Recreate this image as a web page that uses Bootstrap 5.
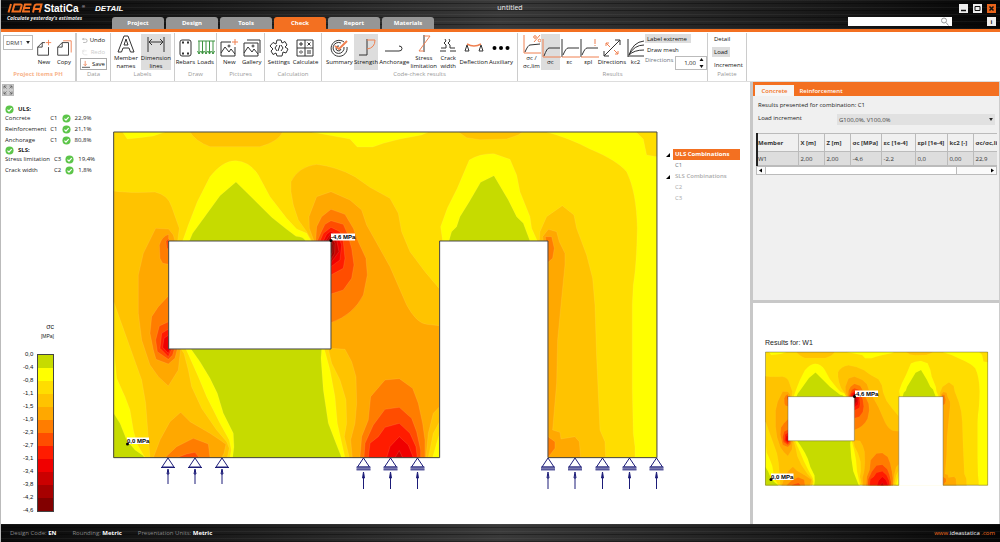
<!DOCTYPE html>
<html lang="en">
<head>
<meta charset="utf-8">
<meta name="viewport" content="width=device-width, initial-scale=1">
<title>IDEA StatiCa Detail</title>
<link href="https://cdn.jsdelivr.net/npm/bootstrap@5.3.0/dist/css/bootstrap.min.css" rel="stylesheet">
<style>
:root{--brand:#f37021}
body{font:400 6px/8px "Open Sans","Noto Sans",sans-serif;color:#222;background:#fff;border-left:1px solid #bbb}
button,select,input{font:inherit;color:inherit;border:0;padding:0;background:none;border-radius:0}
svg{display:block}
.dark-metal{background:repeating-linear-gradient(180deg,rgba(255,255,255,.05) 0 1px,transparent 1px 3px,rgba(0,0,0,.35) 3px 4px,transparent 4px 7px),linear-gradient(90deg,#0a0a0a 0,#191919 20%,#393939 50%,#1b1b1b 80%,#050505 100%)}
.topbar{height:32px;border-bottom:3px solid var(--brand);color:#eee}
.brandbox{width:111px;padding:3px 0 0 6px}
.slogan{font:italic 700 5px/7px "Open Sans",sans-serif;color:#eee}
.doc-title{font-size:7px;line-height:16px;padding-left:60px}
.tabs-row{gap:2px}
.main-tab{width:52px;height:12px;background:#969696;color:#fff;font-weight:700;border-radius:3px 3px 0 0}
.main-tab.on{background:var(--brand)}
.topside{width:152px;padding:4px 4px 0 0}
.win-row{gap:5px}
.win{width:9px;height:9px;background:#eee;color:#111}
.win.x{background:#e8641b}
.search{width:104px;height:9px;background:#fff}
.search input{width:92px;color:#222}
.ribbon{height:50px;border-bottom:1px solid #ddd;padding-top:1px}
.group{border-right:1px solid #ccc;height:48px}
.group>div:first-child{height:37px;padding-top:1px}
.caption{color:#999;line-height:9px}
.caption.warm{color:#f8b48c;font-weight:700}
.w-proj{width:76px;border-right:2px solid #ccc}.w-data{width:34px}.w-lab{width:64px}.w-draw{width:42px}.w-pic{width:48px}.w-calc{width:57px}.w-check{width:196px}.w-res{width:190px}.w-pal{width:39px}
.tool{height:36px;color:#111}
.tool svg,.tiny svg{fill:none;stroke:#333;stroke-width:1}
.tool svg{width:20px;height:20px;margin:0 auto}
.w-proj .tool svg{width:18px}
.tool.on,.flat.on{background:#ddd}
.tool.mid{min-width:18px}
.tiny{height:12px;color:#111;padding:0 1px;gap:2px;border:1px solid transparent}
.tiny.boxed{border-color:#aaa}
.tiny.dim{color:#ccc}
.tiny svg{width:9px;height:9px}
.data-tools{padding:0 3px}
.flat{height:10px;color:#111;padding:0 2px;text-align:left}
.res-side{min-width:62px;gap:2px}
.proj-tools{padding:0 2px}
.picker{width:30px;height:15px;margin-top:1px;border:1px solid #bbb;padding-left:2px;appearance:none;color:#444;background:url("data:image/svg+xml,%3Csvg xmlns='http://www.w3.org/2000/svg' viewBox='0 0 5 4'%3E%3Cpath d='M0 0h5L2.500 4z' fill='%23222'/%3E%3C/svg%3E") no-repeat right 2px center/4px 3px}
.picker.wide{width:158px;height:11px;margin:0;border:0;background-color:#e1e1e1}
.spin{width:32px;height:14px;border:1px solid #bbb;background:#fff}
.spin input{width:20px;text-align:right}
.left-col{width:111px}
.expand{width:12px;height:12px;margin:2px 0 9px 1px;background:#ccc;border:1px solid #bbb}
.checks{margin-left:4px}
.checks h2{font:700 6px/8px "Open Sans",sans-serif;margin:0;height:8px}
.checks td{height:11px;padding:0 4px 0 0;line-height:9px;vertical-align:middle}
.tick{width:9px;height:9px}
.legend{font:400 6px/13px "Liberation Sans",sans-serif;color:#111;margin:0 0 7px 22px}
.legend-head{font:400 5px/9px "Liberation Sans",sans-serif;width:53px;text-align:right;margin-bottom:7px}
.legend-head b{font:400 7px/9px "Liberation Sans",sans-serif}
.scale{width:17px;margin-top:6px;border:1px solid #444;align-self:flex-start}
.scale i{display:block;height:13px}
.plot{padding-top:46px;min-width:0}
.tree-col{width:85px;padding:67px 10px 0 1px}
.tree-col a{display:block;line-height:11px;color:#aaa;text-decoration:none;padding-left:2px;flex:1}
.tree-col .branch{font-weight:600}
.tree-col .picked{background:var(--brand);color:#fff;font-weight:700}
.tree-col .leaf{padding-left:7px}
.tree-col .arrow{width:6px;height:4px;margin-right:1px}
.side{width:250px;border-left:3px solid #c8c8c8;border-right:1px solid #ccc}
.side-top{background:#f0f0f0;border-bottom:3px solid #c8c8c8;height:50%;padding-bottom:2px}
.side-tabs{background:var(--brand);height:14px;padding:3px 0 0 2px}
.side-tabs button{height:11px;width:39px;color:#fff;font-weight:600}
.side-tabs button.on{background:#f6f6f6;color:var(--brand)}
.side-tabs button+button{width:54px}
.side-note{margin:0;padding:5px 0 0 5px}
.side-pick{padding:5px 4px 0 5px}
.grid-box{margin:8px 2px 0 3px;overflow:hidden;border-left:2px solid #222}
.grid-box table{width:254px;table-layout:fixed;margin:0;color:#333}
.grid-box th,.grid-box td{border:1px solid #bbb;padding:0 0 0 2px;white-space:nowrap;vertical-align:middle}
.grid-box th{height:18px;font-weight:700;background:#f0f0f0}
.grid-box td{height:14px;background:#ddd}
.grid-box th:first-child,.grid-box td:first-child{padding-left:0;border-left:0}
.c1{width:40px}.c2{width:26px}.c3{width:31px}.c4{width:34px}.c5{width:32px}
.hbar{margin:0 2px 0 3px;height:9px;border:1px solid #bbb;background:#fafafa}
.hbar svg{width:8px;height:7px}
.hbar div{background:#fff;border:solid #bbb;border-width:0 1px;margin-right:31px}
.mini-title{font:400 7px/9px "Liberation Sans",sans-serif;padding:35px 0 3px 12px}
.status{height:18px;color:#888;padding:0 5px 0 9px}
.status b{color:#fff}
.status a{color:var(--brand);text-decoration:none}
.status a span{color:#fff}
svg text{font-family:"Liberation Sans",Arial,sans-serif}
.o{stroke:#f08050}
.l0{fill:#c6db00}.l1{fill:#ff0}.l2{fill:#fd0}.l3{fill:#ffc300}.l4{fill:#ffa800}.l5{fill:#ff7d00}.l6{fill:#ff4d00}.l7{fill:#ff1c00}.l8{fill:#f00000}.l9{fill:#cb0000}.l10{fill:#a60000}.l11{fill:#820000}
.scale .l0{background:#c6db00}.scale .l1{background:#ff0}.scale .l2{background:#fd0}.scale .l3{background:#ffc300}.scale .l4{background:#ffa800}.scale .l5{background:#ff7d00}.scale .l6{background:#ff4d00}.scale .l7{background:#ff1c00}.scale .l8{background:#f00000}.scale .l9{background:#cb0000}.scale .l10{background:#a60000}.scale .l11{background:#820000}
</style>
</head>
<body class="vh-100 d-flex flex-column overflow-hidden">

<svg width="0" height="0" class="position-absolute" aria-hidden="true">
<defs>
<g id="wall">
<path class="l2" d="M11 21H1641V998H11z"/>
<g stroke="#ffe9a0" stroke-opacity=".2" stroke-width="2">
<path class="l1" d="M38 21 52 42 90 38 130 33 165 21zM605 21 720 42 742 66H788L820 55 870 42 935 30 955 21zM1310 21Q1380 40 1440 72 1520 105 1550 140 1580 200 1582 310 1580 420 1570 480L1567 540 1567 790 1570 925 1575 965V998H1641V21z"/>
<path class="l2" d="M1578 21 1600 42 1610 90 1641 95V21z"/>
<path class="l3" d="M240 21Q255 48 300 65L450 65Q505 50 518 21zM1045 21 1070 38 1110 44 1190 42 1225 30 1238 21z"/>
<path class="l1" d="M218 348 235 300 262 230 300 155Q340 105 378 107 420 110 445 150L480 215 530 280 560 312 590 325 603 348z"/>
<path class="l0" d="M238 348 248 325 270 295 330 212 378 171 430 222 485 277 530 313 558 334Q580 335 587 348z"/>
<path class="l1" d="M998 348 992 305 1012 250 1042 190 1078 105Q1110 85 1152 86L1200 103 1220 150 1230 200 1260 275 1265 310 1282 348z"/>
<path class="l0" d="M1017 348 1025 320 1040 305 1050 275 1078 230 1112 172 1152 152 1195 225 1220 275 1240 295 1260 348z"/>
<path class="l3" d="M11 198Q60 205 135 201 175 210 185 245L208 310 203 348 176 400V672H213L222 685 235 735 245 785 275 850 320 915 350 950 358 970 352 998H120L113 915 107 835 95 765 70 695 45 625 11 530z"/>
<path class="l1" d="M11 640 14 700 20 760 45 815 60 855 70 915 80 955 105 998H11z"/>
<path class="l0" d="M11 865 30 895 50 945 75 975 100 992 103 998H11z"/>
<path class="l4" d="M137 310 176 312 190 330 195 348 176 400V672H212L205 735 175 783 145 755 120 720 95 645 85 565V450L100 385z"/>
<path class="l4" d="M130 998 150 945 180 890 212 862 240 890 300 925 330 945 348 958 342 985 335 998z"/>
<path class="l5" d="M176 328Q155 335 148 360L150 400 158 415 176 418zM176 512 145 545 125 575 120 625 130 675 138 703 175 717 195 700 202 672H176z"/>
<path class="l5" d="M165 998 200 965 250 940 295 957 300 998z"/>
<path class="l6" d="M176 340 168 348 170 368 176 375zM176 590 148 603 137 645 142 680 175 703 188 690 193 672H176zM200 998 230 987 255 982 268 998z"/>
<path class="l7" d="M176 612 155 625 150 670 175 695 185 672z"/>
<path class="l8" d="M176 630 162 640 158 667 175 685 181 672z"/>
<path class="l1" d="M228 672 265 755 290 815 330 895 358 945 364 975 360 998H705L682 895 675 815 660 735 643 672z"/>
<path class="l0" d="M243 672 270 710 300 760 322 805 340 865 370 925 372 965 368 998H695L678 955 655 895 640 795 633 700 635 672z"/>
<path class="l3" d="M605 348 590 320 565 285 550 240 543 200V170Q565 125 620 118 680 125 735 155L780 187 840 220 865 265 875 320 900 380 945 440 989 492V998H718L703 935 710 895 708 825 690 765 665 715 655 672H663V348z"/>
<path class="l4" d="M612 348 598 310 597 275 620 215 663 200 720 225 755 255 770 300 840 425 890 540Q920 595 950 598L989 602V845L970 865 955 925 948 998H727L722 945 735 895 740 835 738 755 725 710 705 673 663 670V348z"/>
<path class="l2" d="M955 998 970 925 989 890V998z"/><path class="l1" d="M968 998 980 955 989 925V998z"/>
<path class="l5" d="M617 348 620 305 635 275 663 253 705 268 730 310 745 350 768 400 772 450 760 510Q730 570 663 593V348zM750 998 755 935 775 885 782 815 825 765 868 761 908 790 925 835 938 895 945 945V998z"/>
<path class="l6" d="M622 348 635 318 645 298 663 287 700 298 712 325 725 370 732 420 725 460 700 495 663 507V348zM762 998 765 955 790 900 825 853 868 847 905 880 920 920 932 975V998z"/>
<path class="l7" d="M630 348 640 325 663 307 690 320 700 350 705 400 700 430 663 450V348zM775 998 780 955 805 935 825 907 868 895 900 925 918 965 922 998z"/>
<path class="l8" d="M640 348 650 328 663 318 685 335 695 360 690 405 663 425V348zM830 998 840 965 868 935 895 960 910 998z"/>
<path class="l9" d="M647 348 663 325 680 345 687 380 663 413V348zM855 998 868 977 878 998z"/>
<path class="l10" d="M654 348 663 333 675 355 674 385 663 403V348z"/>
<path class="l11" d="M663 348 669 360 668 380 663 390z"/>
<path class="l3" d="M1288 348 1290 320 1310 275 1357 242 1392 270 1400 310 1430 390 1448 460 1455 540 1460 695 1470 915 1485 950 1487 998H1314V348z"/>
<path class="l4" d="M1300 348 1298 335 1315 313 1340 320 1348 350 1365 385V420L1355 520 1343 645 1340 775 1328 915 1350 922 1353 942 1395 935 1408 950 1412 998H1314V348z"/>
<path class="l5" d="M1308 348 1306 335 1325 335 1333 370 1328 400 1314 412zM1314 935 1335 950V970L1314 998z"/>
</g>
<path fill="#fff" stroke="#444" stroke-width="3" d="M176 348H663V672H176z"/>
<path fill="#fff" d="M989 348H1314V1002H989z"/>
<path fill="none" stroke="#444" stroke-width="3" d="M11 21H1641V998H1314V348H989V998H11z"/>
</g>
<g id="pin" fill="none" stroke="#1c1c78"><path d="M0 0-6 9H6zM-7 9.500H7"/><path d="M0 26V12"/><path d="M0 11-1 16H1z"/></g>
<g id="roll" fill="none" stroke="#1c1c78"><path d="M0 0-6 9H6z"/><path d="M-7 10.500H7" stroke="#7a7ab0" stroke-width="3"/><path d="M-7 9H7M-7 12H7" stroke-width=".7"/><path d="M0 31V16"/><path d="M0 14-1 20H1z"/></g>
<g id="tickmark"><circle cx="5" cy="5" r="4.500" fill="#5cc549"/><path d="M2.700 5.200 4.400 6.900 7.400 3.400" fill="none" stroke="#fff" stroke-width="1.300"/></g>
<path id="axes" d="M2 1V19H20"/>
</defs>
</svg>

<header class="topbar dark-metal d-flex flex-shrink-0">
  <div class="brandbox flex-shrink-0">
    <svg width="118" height="12" viewBox="0 0 118 12" class="overflow-visible" role="img" aria-label="IDEA StatiCa Detail">
      <g fill="none" stroke="#f37021" stroke-width="2"><path d="M4 1 1.500 9.500M7.500 1.500H13.500Q15 1.500 14.600 3L13 8.500H5.500zM24.500 1.500H18L16 8.500H23M17.500 5H23M26 9.500 27.500 3Q28 1.500 29.500 1.500H34.500L32.500 9.500M27 6H33"/></g>
      <text x="37" y="9" fill="#fff" font-size="10" font-weight="700">StatiCa</text><text x="75" y="5" fill="#fff" font-size="4">®</text>
      <text x="88" y="8" fill="#fff" font-size="8" font-weight="700" font-style="italic">DETAIL</text>
    </svg>
    <div class="slogan text-nowrap">Calculate yesterday's estimates</div>
  </div>
  <div class="flex-grow-1 d-flex flex-column justify-content-between">
    <div class="doc-title text-center">untitled</div>
    <nav class="tabs-row d-flex">
      <button class="main-tab">Project</button><button class="main-tab">Design</button><button class="main-tab">Tools</button><button class="main-tab on">Check</button><button class="main-tab">Report</button><button class="main-tab">Materials</button>
    </nav>
  </div>
  <div class="topside flex-shrink-0 d-flex flex-column align-items-end gap-1">
    <div class="win-row d-flex">
      <button class="win" aria-label="Minimize"><svg viewBox="0 0 9 9"><path d="M2 6.500H7" stroke="#111" stroke-width="1.500"/></svg></button>
      <button class="win" aria-label="Maximize"><svg viewBox="0 0 9 9"><path d="M2 2.500H7V6.500H2z" fill="none" stroke="#111"/></svg></button>
      <button class="win x" aria-label="Close"><svg viewBox="0 0 9 9"><path d="M2.500 2.500 6.500 6.500M6.500 2.500 2.500 6.500" stroke="#111" stroke-width="1.500"/></svg></button>
    </div>
    <div class="d-flex w-100 justify-content-between">
      <div class="search d-flex"><input type="search" aria-label="Search"><svg width="9" height="9" viewBox="0 0 9 9" fill="none" stroke="#999"><circle cx="4" cy="3.500" r="2.500"/><path d="M6 5.500 8.500 8.500"/></svg></div>
      <button class="win fw-bold" aria-label="Information">i</button>
    </div>
  </div>
</header>

<section class="ribbon d-flex flex-shrink-0 text-center">
  <div class="group w-proj"><div class="proj-tools d-flex justify-content-between">
    <select class="picker flex-shrink-0" aria-label="Project item"><option>DRM1</option></select>
    <button class="tool"><svg viewBox="0 0 20 20"><path d="M11 4H8L3 9V18H15V9M8 4V9H3"/><path class="o" d="M15 1V7M12 4H18"/></svg>New</button>
    <button class="tool"><svg viewBox="0 0 20 20"><path d="M8 4H15V18H3V9zV9H3"/><path class="o" d="M9 2H18V15"/></svg>Copy</button></div>
    <div class="caption warm">Project items PH</div></div>
  <div class="group w-data"><div class="data-tools d-flex flex-column align-items-stretch">
    <button class="tiny d-flex align-items-center"><svg viewBox="0 0 10 9"><path d="M3 0 1 2 3 4M1 2H7Q9 2 9 5T6 8H2" stroke="#888"/></svg>Undo</button>
    <button class="tiny dim d-flex align-items-center"><svg viewBox="0 0 10 9"><path d="M3 0 1 2 3 4M1 2H7M4 8H8M1 2Q0 8 4 8" stroke="#ddd"/></svg>Redo</button>
    <button class="tiny boxed d-flex align-items-center"><svg viewBox="0 0 10 9"><path class="o" d="M4 0V6M2 4 4 6 6 4"/><path d="M0 8H10"/></svg>Save</button></div>
    <div class="caption">Data</div></div>
  <div class="group w-lab"><div class="d-flex justify-content-evenly">
    <button class="tool"><svg viewBox="0 0 20 20"><path d="M8 2H12L18 18H14.500L13 14H7L5.500 18H2zM8 11H12L10 5z"/></svg>Member<br>names</button>
    <button class="tool on"><svg viewBox="0 0 20 20"><path d="M2 3V18M18 3V18M3 8H17M6 5 3 8 6 11M14 5 17 8 14 11"/></svg>Dimension<br>lines</button></div>
    <div class="caption">Labels</div></div>
  <div class="group w-draw"><div class="d-flex justify-content-evenly">
    <button class="tool"><svg viewBox="0 0 20 20"><rect x="5" y="2" width="11" height="16" rx="2"/><path d="M7 4.500H9M12 4.500H14M7 15.500H9M12 15.500H14" stroke-width="2"/></svg>Rebars</button>
    <button class="tool"><svg viewBox="0 0 20 20"><path stroke="#3d9440" d="M2 3H19M3 3V16M6.500 3V16M10 3V16M13.500 3V16M17 3V16M1.500 13 3 16 4.500 13M5 13 6.500 16 8 13M8.500 13 10 16 11.500 13M12 13 13.500 16 15 13M15.500 13 17 16 18.500 13"/></svg>Loads</button></div>
    <div class="caption">Draw</div></div>
  <div class="group w-pic"><div class="d-flex justify-content-evenly">
    <button class="tool"><svg viewBox="0 0 20 20"><path d="M12 4H2V18H16V9M2 15 6 9 10 14 12 11 16 16"/><circle cx="10" cy="8" r="1"/><path class="o" d="M16 1V7M13 4H19"/></svg>New</button>
    <button class="tool"><svg viewBox="0 0 20 20"><path d="M2 5H16V18H2zM2 15 6 9 10 14 12 11 16 16M5 2H18V15"/><circle cx="11" cy="8" r="1"/></svg>Gallery</button></div>
    <div class="caption">Pictures</div></div>
  <div class="group w-calc"><div class="d-flex justify-content-evenly">
    <button class="tool"><svg viewBox="0 0 20 20"><path d="M8 2H12L13 5 16 3.500 18 7 16 9 19 11 17 15 14 14 13 18H8L7 15 4 16.500 2 13 4 11 1 8 4 4.500 7 6z"/><path d="M8 7 6 10 8 13M12 7 14 10 12 13M11 7 9 13"/></svg>Settings</button>
    <button class="tool"><svg viewBox="0 0 20 20"><path d="M2 2H18V18H2zM10 2V18M2 10H18M4 6H8M6 4V8M12.500 4.500 15.500 7.500M15.500 4.500 12.500 7.500M4 14H8M12 13H16M12 15H16M6 12V12.700M6 15.300V16"/></svg>Calculate</button></div>
    <div class="caption">Calculation</div></div>
  <div class="group w-check"><div class="d-flex justify-content-between px-1">
    <button class="tool"><svg viewBox="0 0 20 20"><path d="M15 4A8 8 0 1 0 18 9M12 5A5.500 5.500 0 1 0 15 9M10 8A2.500 2.500 0 1 0 12 11"/><path class="o" stroke-width="2" d="M6 8 10 11 18 3"/></svg>Summary</button>
    <button class="tool on"><svg viewBox="0 0 20 20"><path d="M11 1V17M3 17H11"/><path class="o" d="M11 2H19Q19 10 11 11"/></svg>Strength</button>
    <button class="tool"><svg viewBox="0 0 20 20"><path d="M1 13H15Q18 13 18 10.500T15 8"/></svg>Anchorage</button>
    <button class="tool"><svg viewBox="0 0 20 20"><path d="M10 1V18"/><path class="o" d="M10 2H16L5 17H10"/></svg>Stress<br>limitation</button>
    <button class="tool"><svg viewBox="0 0 20 20"><path d="M3 14H8V11L6 9 8 7 7 5M17 14H12V11L10 9 12 7 11 5M2 17H8M12 17H18"/></svg>Crack<br>width</button>
    <button class="tool"><svg viewBox="0 0 20 20"><path class="o" d="M3 6Q10 10 17 6" stroke-width="1.500"/><path d="M3 7 1 13H5zM17 7 15 13H19z"/></svg>Deflection</button>
    <button class="tool"><svg viewBox="0 0 20 20" fill="none"><path d="M3.500 10h.01M10 10h.01M16.500 10h.01" stroke="#000" stroke-width="4" stroke-linecap="round"/></svg>Auxiliary</button></div>
    <div class="caption">Code-check results</div></div>
  <div class="group w-res"><div class="d-flex ps-1">
    <button class="tool mid"><svg viewBox="0 0 20 20"><use href="#axes" class="o"/><path d="M3 18Q6 11 8 11L18 10"/><path class="o" d="M18 1 12 8"/><circle class="o" cx="13" cy="3" r="1.300"/><circle class="o" cx="17.500" cy="6.500" r="1.300"/></svg>σc /<br>σc,lim</button>
    <button class="tool mid on"><svg viewBox="0 0 20 20"><use href="#axes" class="o"/><path d="M3 18Q6 10 8 10H19"/></svg>σc</button>
    <button class="tool mid"><svg viewBox="0 0 20 20"><path d="M2 1V19M3 17Q6 10 8 10H19"/><path class="o" d="M2 19H20"/></svg>εc</button>
    <button class="tool mid"><svg viewBox="0 0 20 20"><path d="M2 1V19M3 17Q6 10 8 10H19"/><path class="o" d="M2 19H20M16 1V6M16 7V8"/></svg>εpl</button>
    <button class="tool"><svg viewBox="0 0 20 20"><path d="M2 18 18 2M13 2H18V7M2 13V18H7"/><path class="o" d="M4 5 8 9M4 8V5H7M12 12 16 16M16 13V16H13"/></svg>Directions</button>
    <button class="tool mid"><svg viewBox="0 0 20 20"><path d="M2 1V19M2 18H18M3 17Q7 4 18 3M3 17Q8 7 18 7M3 17Q8 12 18 12"/></svg>kc2</button>
    <div class="res-side flex-grow-1 d-flex flex-column text-start">
      <button class="flat on w-75">Label extreme</button>
      <button class="flat w-75">Draw mesh</button>
      <div class="d-flex justify-content-between"><label for="dirs" class="text-secondary">Directions</label>
        <div class="spin d-flex align-items-center flex-shrink-0"><input id="dirs" type="text" value="1,00"><svg width="8" height="10" viewBox="0 0 8 10" fill="#111"><path d="M3.500 3 5.500 0 7.500 3zM3.500 7 5.500 10 7.500 7z"/></svg></div></div>
    </div></div>
    <div class="caption">Results</div></div>
  <div class="group w-pal"><div class="d-flex flex-column align-items-start justify-content-between ps-1">
    <button class="flat">Detail</button><button class="flat on">Load</button><button class="flat">Increment</button></div>
    <div class="caption">Palette</div></div>
</section>

<main class="d-flex flex-grow-1 overflow-hidden">
  <section class="left-col flex-shrink-0 d-flex flex-column">
    <button class="expand flex-shrink-0" aria-label="Zoom to fit"><svg viewBox="0 0 10 10" fill="none" stroke="#555"><path d="M1 3.500V1H3.500M6.500 1H9V3.500M1 6.500V9H3.500M6.500 9H9V6.500M1 1 3.500 3.500M9 1 6.500 3.500M1 9 3.500 6.500M9 9 6.500 6.500" stroke-width=".7"/></svg></button>
    <div class="checks">
      <h2 class="d-flex gap-1"><svg class="tick" viewBox="0 0 10 10"><use href="#tickmark"/></svg>ULS:</h2>
      <table>
        <tr><td>Concrete</td><td>C1</td><td><svg class="tick" viewBox="0 0 10 10"><use href="#tickmark"/></svg></td><td>22,9%</td></tr>
        <tr><td>Reinforcement</td><td>C1</td><td><svg class="tick" viewBox="0 0 10 10"><use href="#tickmark"/></svg></td><td>21,1%</td></tr>
        <tr><td>Anchorage</td><td>C1</td><td><svg class="tick" viewBox="0 0 10 10"><use href="#tickmark"/></svg></td><td>80,8%</td></tr>
      </table>
      <h2 class="d-flex gap-1"><svg class="tick" viewBox="0 0 10 10"><use href="#tickmark"/></svg>SLS:</h2>
      <table>
        <tr><td>Stress limitation</td><td>C3</td><td><svg class="tick" viewBox="0 0 10 10"><use href="#tickmark"/></svg></td><td>19,4%</td></tr>
        <tr><td>Crack width</td><td>C2</td><td><svg class="tick" viewBox="0 0 10 10"><use href="#tickmark"/></svg></td><td>1,8%</td></tr>
      </table>
    </div>
    <div class="legend-head mt-auto"><b>σc</b><br>[MPa]</div>
    <div class="legend d-flex gap-1">
      <div class="text-end"><div>0,0</div><div>-0,4</div><div>-0,8</div><div>-1,1</div><div>-1,5</div><div>-1,9</div><div>-2,3</div><div>-2,7</div><div>-3,1</div><div>-3,4</div><div>-3,8</div><div>-4,2</div><div>-4,6</div></div>
      <div class="scale"><i class="l0"></i><i class="l1"></i><i class="l2"></i><i class="l3"></i><i class="l4"></i><i class="l5"></i><i class="l6"></i><i class="l7"></i><i class="l8"></i><i class="l9"></i><i class="l10"></i><i class="l11"></i></div>
    </div>
  </section>

  <section class="plot flex-grow-1">
    <svg class="w-100" viewBox="112 128 553 365" role="img" aria-label="Concrete stress contour">
      <use href="#wall" transform="translate(110 125) scale(.3333)"/>
      <use href="#pin" x="168" y="458"/><use href="#pin" x="195" y="458"/><use href="#pin" x="222" y="458"/>
      <use href="#roll" x="363.500" y="458"/><use href="#roll" x="390.500" y="458"/><use href="#roll" x="417.500" y="458"/>
      <use href="#roll" x="548" y="458"/><use href="#roll" x="575" y="458"/><use href="#roll" x="602.500" y="458"/><use href="#roll" x="629.500" y="458"/><use href="#roll" x="656.500" y="458"/>
      <path fill="#fff" d="M331 233.500H355V240.500H331zM127 437.500H149V444H127z"/>
      <circle cx="331" cy="240.500" r="1.500"/><circle cx="127.500" cy="444" r="1.500"/>
      <text x="331" y="239" font-size="6" font-weight="700">-4,6 MPa</text><text x="127" y="443" font-size="6" font-weight="700">0,0 MPa</text>
    </svg>
  </section>

  <nav class="tree-col flex-shrink-0">
    <div class="d-flex align-items-center"><svg class="arrow" viewBox="0 0 6 4"><path d="M4 0V4H0z"/></svg><a href="#" class="picked">ULS Combinations</a></div>
    <div class="leaf d-flex"><a href="#" class="text-secondary">C1</a></div>
    <div class="d-flex align-items-center"><svg class="arrow" viewBox="0 0 6 4"><path d="M4 0V4H0z"/></svg><a href="#" class="branch">SLS Combinations</a></div>
    <div class="leaf d-flex"><a href="#">C2</a></div>
    <div class="leaf d-flex"><a href="#">C3</a></div>
  </nav>

  <aside class="side flex-shrink-0 d-flex flex-column">
    <div class="side-top flex-shrink-0">
      <div class="side-tabs d-flex"><button class="on">Concrete</button><button>Reinforcement</button></div>
      <p class="side-note">Results presented for combination: C1</p>
      <div class="side-pick d-flex justify-content-between"><label for="inc">Load increment</label>
        <select id="inc" class="picker wide"><option>G100,0%, V100,0%</option></select></div>
      <div class="grid-box">
        <table>
          <colgroup><col class="c1"><col class="c2"><col class="c2"><col class="c3"><col class="c4"><col class="c5"><col class="c2"><col></colgroup>
          <thead><tr><th>Member</th><th>X [m]</th><th>Z [m]</th><th>σc [MPa]</th><th>εc [1e-4]</th><th>εpl [1e-4]</th><th>kc2 [-]</th><th>σc/σc,lim</th></tr></thead>
          <tbody><tr><td>W1</td><td>2,00</td><td>2,00</td><td>-4,6</td><td>-2,2</td><td>0,0</td><td>0,00</td><td>22,9</td></tr></tbody>
        </table>
      </div>
      <div class="hbar d-flex"><svg viewBox="0 0 8 7"><path d="M5 1.500V5.500L2 3.500z"/></svg><div class="flex-grow-1"></div><svg viewBox="0 0 8 7"><path d="M3 1.500V5.500L6 3.500z"/></svg></div>
    </div>
    <div class="flex-grow-1">
      <div class="mini-title">Results for: W1</div>
      <svg class="w-100" viewBox="753 350 246 140" role="img" aria-label="Results for W1">
        <use href="#wall" transform="translate(764 349.200) scale(.1363)"/>
        <path fill="#fff" d="M855 390.500H878V397H855zM771 473.500H793.500V480H771z"/>
        <circle cx="854.500" cy="396.500" r="1.500"/><circle cx="771" cy="479.500" r="1.500"/>
        <text x="854" y="396" font-size="6" font-weight="700">-4,6 MPa</text><text x="771" y="479" font-size="6" font-weight="700">0,0 MPa</text>
      </svg>
    </div>
  </aside>
</main>

<footer class="status dark-metal d-flex align-items-center gap-3 flex-shrink-0">
  <span>Design Code: <b>EN</b></span><span>Rounding: <b>Metric</b></span><span>Presentation Units: <b>Metric</b></span>
  <a href="#" class="ms-auto">www.<span>ideastatica</span> .com</a>
</footer>
<script src="https://cdn.jsdelivr.net/npm/bootstrap@5.3.0/dist/js/bootstrap.bundle.min.js"></script>
</body>
</html>
